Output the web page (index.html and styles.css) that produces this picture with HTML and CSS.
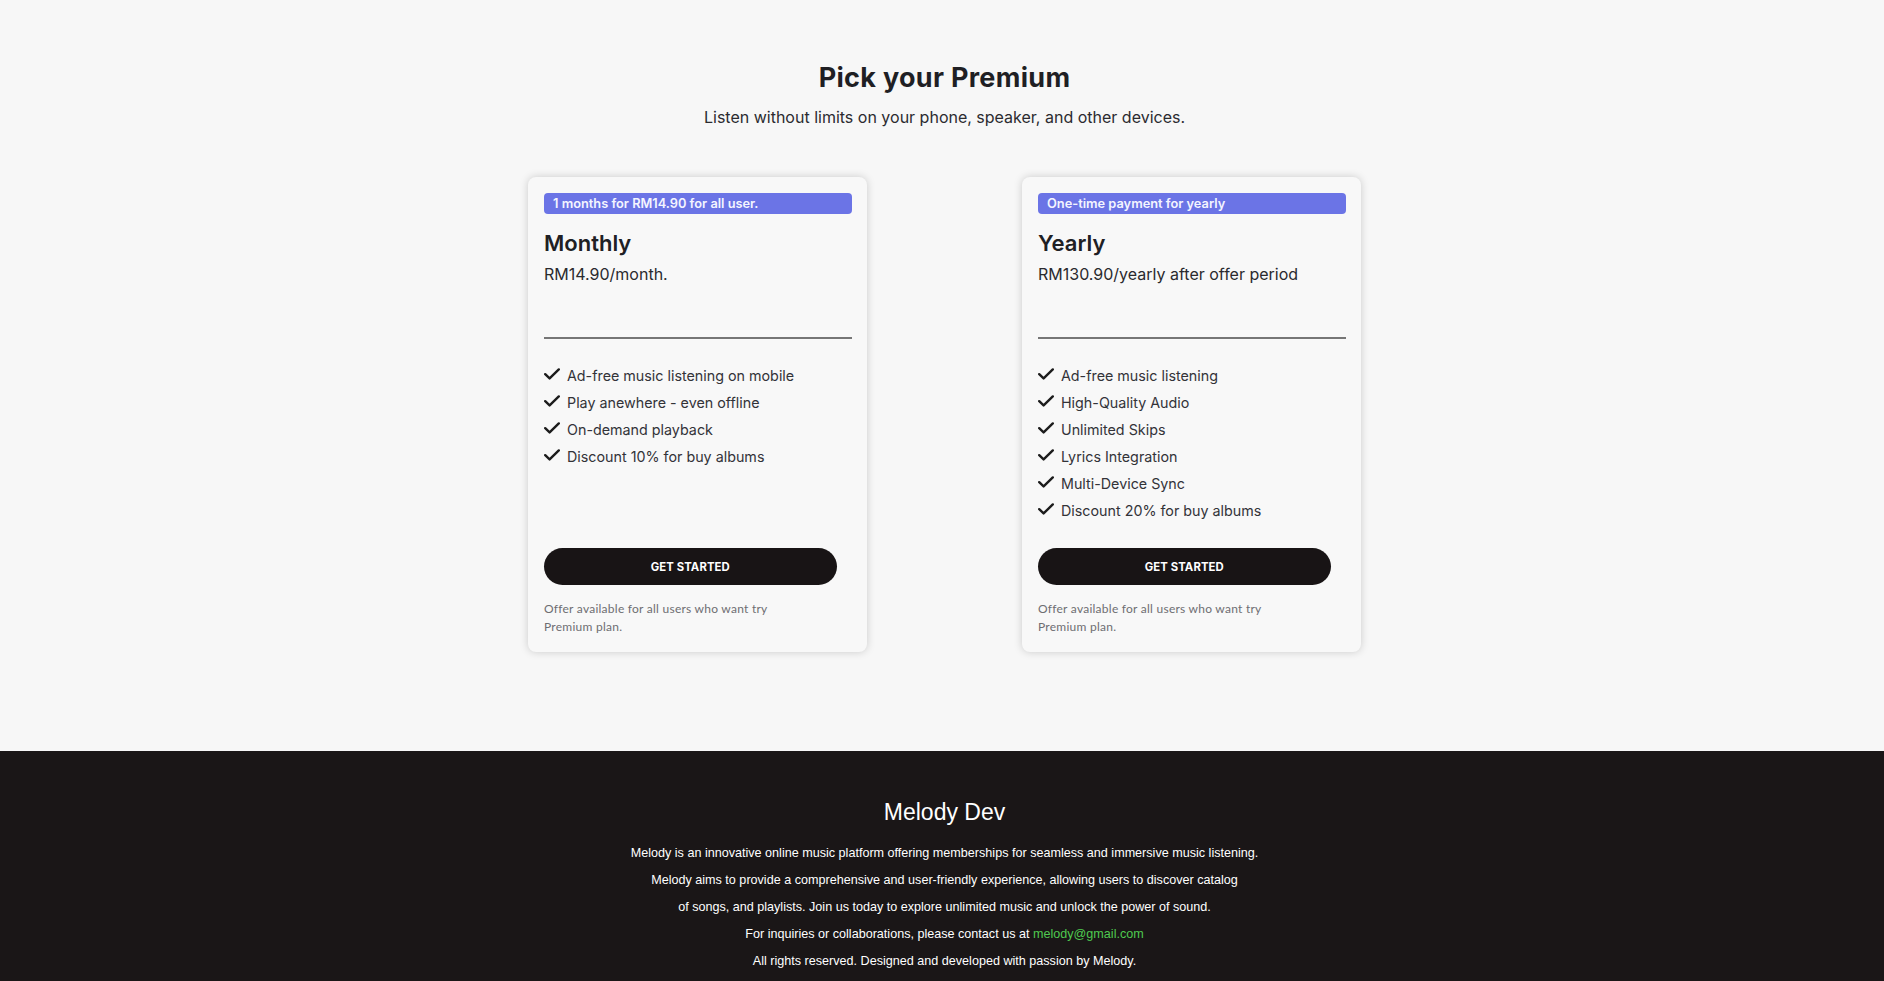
FILE: index.html
```html
<!DOCTYPE html>
<html lang="en">
<head>
<meta charset="utf-8">
<title>Pick your Premium</title>
<link rel="stylesheet" href="styles.css">
</head>
<body>
<main class="pricing">
  <h1 class="pricing-title">Pick your Premium</h1>
  <p class="pricing-subtitle">Listen without limits on your phone, speaker, and other devices.</p>

  <div class="plans">
    <section class="plan">
      <div class="plan-badge">1 months for RM14.90 for all user.</div>
      <h2 class="plan-name">Monthly</h2>
      <p class="plan-price">RM14.90/month.</p>
      <hr class="plan-divider">
      <ul class="plan-features">
        <li><svg class="check" viewBox="0 0 16 12"><path d="M1.2 6.2 L5.6 10.4 L14.8 1.4"/></svg>Ad-free music listening on mobile</li>
        <li><svg class="check" viewBox="0 0 16 12"><path d="M1.2 6.2 L5.6 10.4 L14.8 1.4"/></svg>Play anewhere - even offline</li>
        <li><svg class="check" viewBox="0 0 16 12"><path d="M1.2 6.2 L5.6 10.4 L14.8 1.4"/></svg>On-demand playback</li>
        <li><svg class="check" viewBox="0 0 16 12"><path d="M1.2 6.2 L5.6 10.4 L14.8 1.4"/></svg>Discount 10% for buy albums</li>
      </ul>
      <button class="plan-button">GET STARTED</button>
      <p class="plan-note">Offer available for all users who want try Premium plan.</p>
    </section>

    <section class="plan">
      <div class="plan-badge">One-time payment for yearly</div>
      <h2 class="plan-name">Yearly</h2>
      <p class="plan-price">RM130.90/yearly after offer period</p>
      <hr class="plan-divider">
      <ul class="plan-features">
        <li><svg class="check" viewBox="0 0 16 12"><path d="M1.2 6.2 L5.6 10.4 L14.8 1.4"/></svg>Ad-free music listening</li>
        <li><svg class="check" viewBox="0 0 16 12"><path d="M1.2 6.2 L5.6 10.4 L14.8 1.4"/></svg>High-Quality Audio</li>
        <li><svg class="check" viewBox="0 0 16 12"><path d="M1.2 6.2 L5.6 10.4 L14.8 1.4"/></svg>Unlimited Skips</li>
        <li><svg class="check" viewBox="0 0 16 12"><path d="M1.2 6.2 L5.6 10.4 L14.8 1.4"/></svg>Lyrics Integration</li>
        <li><svg class="check" viewBox="0 0 16 12"><path d="M1.2 6.2 L5.6 10.4 L14.8 1.4"/></svg>Multi-Device Sync</li>
        <li><svg class="check" viewBox="0 0 16 12"><path d="M1.2 6.2 L5.6 10.4 L14.8 1.4"/></svg>Discount 20% for buy albums</li>
      </ul>
      <button class="plan-button">GET STARTED</button>
      <p class="plan-note">Offer available for all users who want try Premium plan.</p>
    </section>
  </div>
</main>

<footer class="footer">
  <h2 class="footer-title">Melody Dev</h2>
  <p class="footer-line">Melody is an innovative online music platform offering memberships for seamless and immersive music listening.</p>
  <p class="footer-line">Melody aims to provide a comprehensive and user-friendly experience, allowing users to discover catalog<br>of songs, and playlists. Join us today to explore unlimited music and unlock the power of sound.</p>
  <p class="footer-line">For inquiries or collaborations, please contact us at <a class="footer-mail" href="#">melody@gmail.com</a></p>
  <p class="footer-line">All rights reserved. Designed and developed with passion by Melody.</p>
</footer>
</body>
</html>
```

FILE: styles.css
```css
* { box-sizing: border-box; }

html, body {
  margin: 0;
  padding: 0;
}

body {
  background: #f7f7f7;
  font-family: Inter, "Noto Sans", sans-serif;
  color: #222226;
}

.pricing {
  padding: 62px 0 99px 5px;
  display: flex;
  flex-direction: column;
  align-items: center;
}

.pricing-title {
  margin: 0;
  font-size: 27px;
  line-height: 32px;
  font-weight: 700;
  color: #1f1f24;
  letter-spacing: 0.3px;
}

.pricing-subtitle {
  margin: 12px 0 0;
  font-size: 16px;
  line-height: 22px;
  color: #2b2b30;
}

.plans {
  margin-top: 49px;
  display: flex;
  gap: 155px;
  align-items: stretch;
}

.plan {
  width: 339px;
  background: #f8f8f8;
  border-radius: 8px;
  box-shadow: 0 0 8px rgba(0, 0, 0, 0.18);
  padding: 16px 15px 16px 16px;
  display: flex;
  flex-direction: column;
}

.plan-badge {
  height: 21px;
  background: #6b74e6;
  color: #f4f5ff;
  border-radius: 4px;
  padding: 0 9px;
  font-size: 12.8px;
  line-height: 21px;
  font-weight: 600;
}

.plan-name {
  margin: 16px 0 0;
  font-size: 22px;
  line-height: 26px;
  font-weight: 600;
  color: #202024;
}

.plan-price {
  margin: 7px 0 0;
  font-size: 16px;
  line-height: 22px;
  color: #2a2a2e;
}

.plan-divider {
  margin: 52px 0 0;
  border: 0;
  height: 2px;
  background: #767676;
}

.plan-features {
  list-style: none;
  margin: 23px 0 24px;
  padding: 0;
  flex: 1;
}

.plan-features li {
  display: flex;
  align-items: center;
  gap: 7px;
  font-size: 14.3px;
  line-height: 27px;
  color: #333338;
}

.check {
  width: 16px;
  height: 12px;
  flex: none;
  fill: none;
  stroke: #1c1c1c;
  stroke-width: 2.4;
  stroke-linecap: round;
  stroke-linejoin: round;
  margin-top: -4px;
}

.plan-button {
  width: 95%;
  height: 37px;
  border: 0;
  border-radius: 19px;
  background: #181415;
  color: #ffffff;
  font-family: Inter, "Noto Sans", sans-serif;
  font-size: 11.3px;
  font-weight: 700;
  letter-spacing: 0.1px;
  cursor: pointer;
}

.plan-button:hover { background: #2a2526; }

.plan-note {
  margin: 15px 0 0;
  max-width: 235px;
  font-family: Lato, "Open Sans", sans-serif;
  font-size: 12px;
  line-height: 18px;
  color: #6e6e72;
  letter-spacing: 0.25px;
}

.footer {
  background: #1a1617;
  color: #ffffff;
  text-align: center;
  padding: 48px 0 40px 5px;
  font-family: "Liberation Sans", Arial, sans-serif;
}

.footer-title {
  margin: 0 0 15px;
  font-size: 23px;
  line-height: 26px;
  font-weight: 400;
}

.footer-line {
  margin: 0;
  font-size: 12.6px;
  line-height: 27px;
}

.footer-mail {
  color: #4fc94f;
  text-decoration: none;
}
```
